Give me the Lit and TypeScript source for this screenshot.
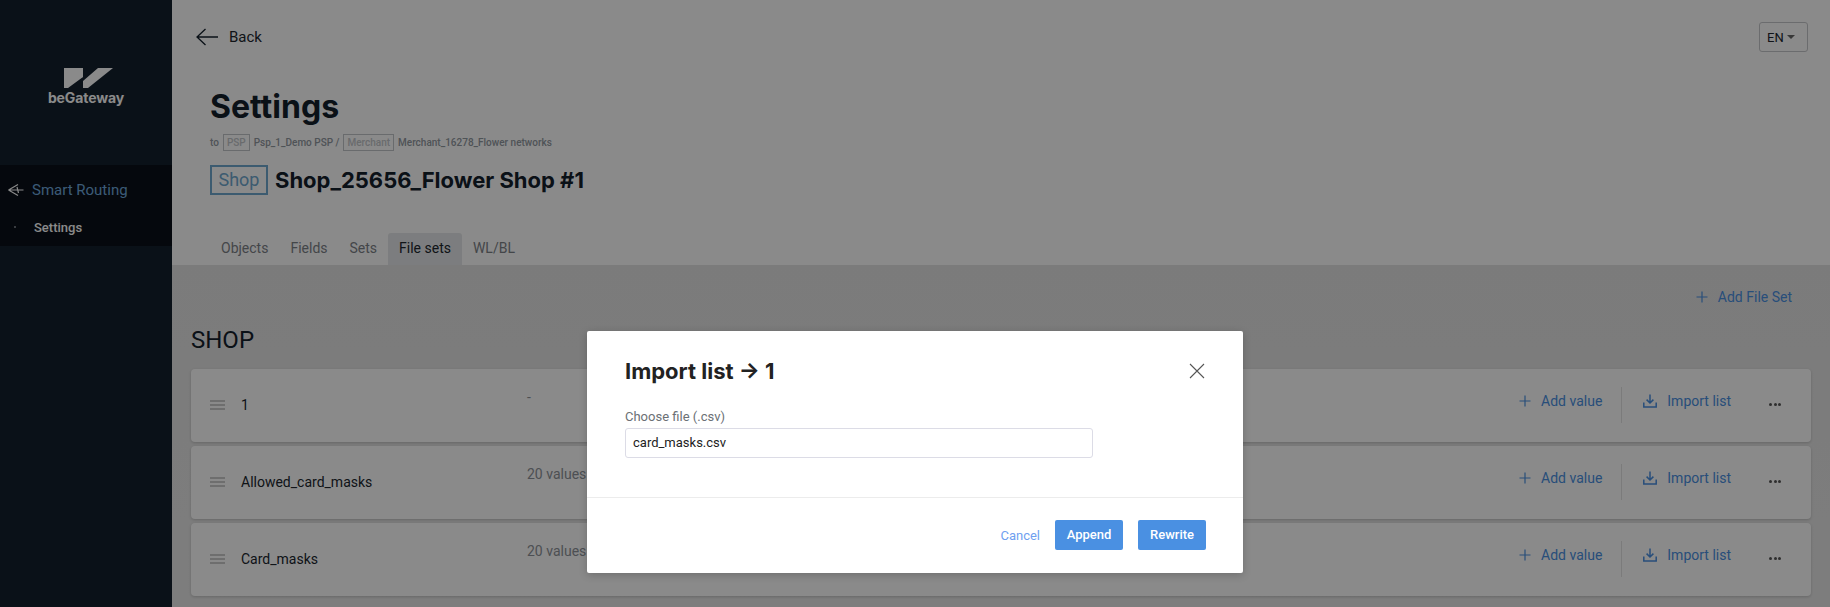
import { LitElement, html, css, svg } from 'lit';
import { customElement } from 'lit/decorators.js';

const plusIcon = svg`<path d="M6 0.5v11M0.5 6h11" fill="none" stroke="currentColor" stroke-width="1.2"/>`;
const importIcon = svg`<path d="M7 0.5v8.2M3.6 5.6L7 9l3.4-3.4M0.8 8.5v4.6h12.4V8.5" fill="none" stroke="currentColor" stroke-width="1.5"/>`;

const rows = [
  { name: '1', value: '-' },
  { name: 'Allowed_card_masks', value: '20 values' },
  { name: 'Card_masks', value: '20 values' },
];

@customElement('app-root')
export class AppRoot extends LitElement {
  static styles = css`
    :host {
      display: block;
      position: relative;
      height: 607px;
      overflow: hidden;
      font-family: Roboto, 'Liberation Sans', sans-serif;
      font-size: 14px;
      color: #20262e;
      background: #fff;
    }

    .layout {
      display: flex;
      height: 607px;
    }

    .sidebar {
      width: 172px;
      flex: none;
      background: #13202e;
    }

    .logo {
      height: 165px;
      display: flex;
      flex-direction: column;
      align-items: center;
      box-sizing: border-box;
      padding-top: 68px;
      color: #fff;
    }

    .logo svg {
      display: block;
      margin-left: 5px;
    }

    .logo span {
      font-family: Inter, sans-serif;
      font-weight: 700;
      font-size: 14px;
      line-height: 18px;
      margin-top: 1px;
      letter-spacing: -0.1px;
    }

    .menu {
      height: 81px;
      background: #0a1018;
      box-sizing: border-box;
      padding-top: 10px;
    }

    .menu-head {
      display: flex;
      align-items: center;
      height: 30px;
      padding-left: 8px;
      gap: 8px;
      color: #6fa8dc;
      font-size: 15px;
    }

    .menu-head svg {
      color: #fff;
    }

    .menu-sub {
      display: flex;
      align-items: center;
      height: 22px;
      margin-top: 11px;
      color: #fff;
      font-size: 13px;
      font-weight: 500;
      padding-left: 14px;
      gap: 18px;
    }

    .menu-sub i {
      width: 2px;
      height: 2px;
      border-radius: 50%;
      background: #8a8f96;
    }

    .main {
      flex: 1;
      min-width: 0;
    }

    .topbar {
      display: flex;
      justify-content: space-between;
      align-items: center;
      height: 30px;
      padding: 22px 22px 0 24px;
    }

    .back {
      display: flex;
      align-items: center;
      gap: 11px;
      font-size: 15px;
    }

    .lang {
      width: 49px;
      height: 30px;
      box-sizing: border-box;
      border: 1px solid #c6c8cc;
      border-radius: 3px;
      display: flex;
      align-items: center;
      padding-left: 7px;
      gap: 3px;
      font-size: 13px;
    }

    .lang i {
      width: 0;
      height: 0;
      border-left: 4px solid transparent;
      border-right: 4px solid transparent;
      border-top: 4px solid #666;
    }

    .head {
      padding-left: 38px;
    }

    h1 {
      margin: 35px 0 0;
      font-family: Inter, sans-serif;
      font-size: 32px;
      line-height: 40px;
      font-weight: 700;
      color: #14202c;
    }

    .crumbs {
      display: flex;
      align-items: center;
      height: 16px;
      margin-top: 7px;
      font-size: 10px;
      color: #9299a1;
      font-weight: 500;
      gap: 4px;
    }

    .crumbs b {
      font-weight: 500;
      color: #c3c6ca;
      border: 1px solid #c3c6ca;
      padding: 0 3px;
      line-height: 15px;
    }

    .shop {
      display: flex;
      align-items: center;
      gap: 7px;
      height: 30px;
      margin-top: 15px;
    }

    .shop b {
      box-sizing: border-box;
      width: 58px;
      height: 30px;
      border: 2px solid #6fa8cf;
      color: #6fa8cf;
      font-size: 18px;
      font-weight: 400;
      text-align: center;
      line-height: 25px;
    }

    .shop span {
      font-family: Inter, sans-serif;
      font-weight: 700;
      font-size: 22px;
      color: #14202c;
    }

    .tabs {
      display: flex;
      height: 32px;
      margin-top: 38px;
      padding-left: 38px;
    }

    .tab {
      padding: 0 11px;
      line-height: 30px;
      color: #7d8288;
      border-radius: 3px 3px 0 0;
    }

    .tab.active {
      background: #e6e8ea;
      color: #20262e;
    }

    .content {
      height: 342px;
      background: linear-gradient(#e4e4e4, #e8e8e8);
      padding: 0 19px;
    }

    .add-set {
      display: flex;
      justify-content: flex-end;
      align-items: center;
      gap: 10px;
      height: 20px;
      padding: 22px 19px 0 0;
      color: #4a90e2;
    }

    h2 {
      margin: 0;
      padding-top: 19px;
      font-size: 24px;
      line-height: 28px;
      font-weight: 400;
      color: #14202c;
    }

    .rows {
      margin-top: 15px;
      display: flex;
      flex-direction: column;
      gap: 4px;
    }

    .row {
      display: flex;
      height: 73px;
      box-sizing: border-box;
      padding: 18px 0 0 19px;
      background: #fff;
      border-radius: 4px;
      box-shadow: 0 1px 3px rgba(0, 0, 0, 0.18);
    }

    .grip {
      width: 15px;
      flex: none;
      margin-top: 13px;
      height: 10px;
      border-top: 2px solid #ccc;
      border-bottom: 2px solid #ccc;
      position: relative;
      box-sizing: border-box;
    }

    .grip::after {
      content: '';
      display: block;
      height: 2px;
      margin-top: 2px;
      background: #ccc;
    }

    .name {
      width: 286px;
      flex: none;
      margin-left: 16px;
      line-height: 36px;
    }

    .value {
      flex: 1;
      color: #8e9399;
      line-height: 20px;
    }

    .act {
      display: flex;
      align-items: flex-start;
      color: #4a90e2;
    }

    .link {
      display: flex;
      align-items: center;
      height: 28px;
      gap: 10px;
    }

    .sep {
      width: 1px;
      height: 36px;
      background: #e4e4e4;
      margin: 0 21px 0 19px;
    }

    .dots {
      display: flex;
      gap: 1.5px;
      margin: 16px 30px 0 38px;
    }

    .dots i {
      width: 3px;
      height: 3px;
      border-radius: 50%;
      background: #555;
    }

    .overlay {
      position: absolute;
      inset: 0;
      display: flex;
      justify-content: center;
      align-items: flex-start;
      padding-top: 331px;
      background: rgba(0, 0, 0, 0.46);
    }

    .modal {
      width: 656px;
      height: 242px;
      background: #fff;
      border-radius: 2px;
      box-shadow: 0 2px 8px rgba(0, 0, 0, 0.2);
      color: #222;
    }

    .modal-body {
      height: 167px;
      box-sizing: border-box;
      padding: 0 38px;
      border-bottom: 1px solid #ececec;
    }

    .modal-title {
      display: flex;
      justify-content: space-between;
      align-items: center;
      height: 30px;
      padding-top: 25px;
    }

    .modal-title span {
      font-family: Inter, sans-serif;
      font-weight: 700;
      font-size: 22px;
    }

    .modal-title svg {
      color: #555;
      margin-right: 0;
    }

    label {
      display: block;
      margin-top: 22px;
      font-size: 13px;
      line-height: 18px;
      color: #6b7075;
    }

    .input {
      width: 468px;
      height: 30px;
      box-sizing: border-box;
      margin-top: 2px;
      border: 1px solid #dcdce6;
      border-radius: 3px;
      padding-left: 7px;
      line-height: 28px;
      font-size: 13px;
    }

    .modal-foot {
      display: flex;
      justify-content: flex-end;
      align-items: center;
      gap: 15px;
      height: 74px;
      padding: 0 37px 0 0;
      box-sizing: border-box;
      font-size: 13px;
      font-weight: 500;
    }

    .cancel {
      color: #6f9ff0;
      font-weight: 400;
    }

    .btn {
      height: 30px;
      box-sizing: border-box;
      width: 68px;
      background: #4a90e2;
      color: #fff;
      border-radius: 2px;
      text-align: center;
      line-height: 30px;
    }
  `;

  renderRow(r: { name: string; value: string }) {
    return html`
      <div class="row">
        <div class="grip"></div>
        <div class="name">${r.name}</div>
        <div class="value">${r.value}</div>
        <div class="act">
          <div class="link">
            <svg width="12" height="12" viewBox="0 0 12 12">${plusIcon}</svg>
            Add value
          </div>
          <div class="sep"></div>
          <div class="link">
            <svg width="14" height="14" viewBox="0 0 14 14">${importIcon}</svg>
            Import list
          </div>
          <div class="dots"><i></i><i></i><i></i></div>
        </div>
      </div>
    `;
  }

  render() {
    return html`
      <div class="layout">
        <aside class="sidebar">
          <div class="logo">
            <svg width="49" height="20" viewBox="0 0 49 20">
              <path d="M0 0h19v13L34 0h15L24 20H19V9L4 20H0z" fill="currentColor" />
            </svg>
            <span>beGateway</span>
          </div>
          <div class="menu">
            <div class="menu-head">
              <svg width="16" height="16" viewBox="0 0 16 16">
                <path d="M0.5 8h15M0.5 8L10 2.5M0.5 8L10 13.5M9 5l1.5 6" fill="none" stroke="currentColor" stroke-width="1.2" />
              </svg>
              Smart Routing
            </div>
            <div class="menu-sub"><i></i>Settings</div>
          </div>
        </aside>
        <div class="main">
          <div class="topbar">
            <div class="back">
              <svg width="22" height="18" viewBox="0 0 22 18">
                <path d="M22 9H1M9.5 1L1 9l8.5 8" fill="none" stroke="#14202c" stroke-width="1.3" />
              </svg>
              Back
            </div>
            <div class="lang">EN<i></i></div>
          </div>
          <div class="head">
            <h1>Settings</h1>
            <div class="crumbs">
              to <b>PSP</b> Psp_1_Demo PSP&nbsp;/ <b>Merchant</b> Merchant_16278_Flower networks
            </div>
            <div class="shop"><b>Shop</b><span>Shop_25656_Flower Shop #1</span></div>
          </div>
          <div class="tabs">
            <div class="tab">Objects</div>
            <div class="tab">Fields</div>
            <div class="tab">Sets</div>
            <div class="tab active">File sets</div>
            <div class="tab">WL/BL</div>
          </div>
          <div class="content">
            <div class="add-set">
              <svg width="12" height="12" viewBox="0 0 12 12">${plusIcon}</svg>
              Add File Set
            </div>
            <h2>SHOP</h2>
            <div class="rows">${rows.map((r) => this.renderRow(r))}</div>
          </div>
        </div>
      </div>
      <div class="overlay">
        <div class="modal">
          <div class="modal-body">
            <div class="modal-title">
              <span>Import list → 1</span>
              <svg width="16" height="16" viewBox="0 0 16 16">
                <path d="M1 1l14 14M15 1L1 15" fill="none" stroke="currentColor" stroke-width="1.1" />
              </svg>
            </div>
            <label>Choose file (.csv)</label>
            <div class="input">card_masks.csv</div>
          </div>
          <div class="modal-foot">
            <span class="cancel">Cancel</span>
            <div class="btn">Append</div>
            <div class="btn">Rewrite</div>
          </div>
        </div>
      </div>
    `;
  }
}
